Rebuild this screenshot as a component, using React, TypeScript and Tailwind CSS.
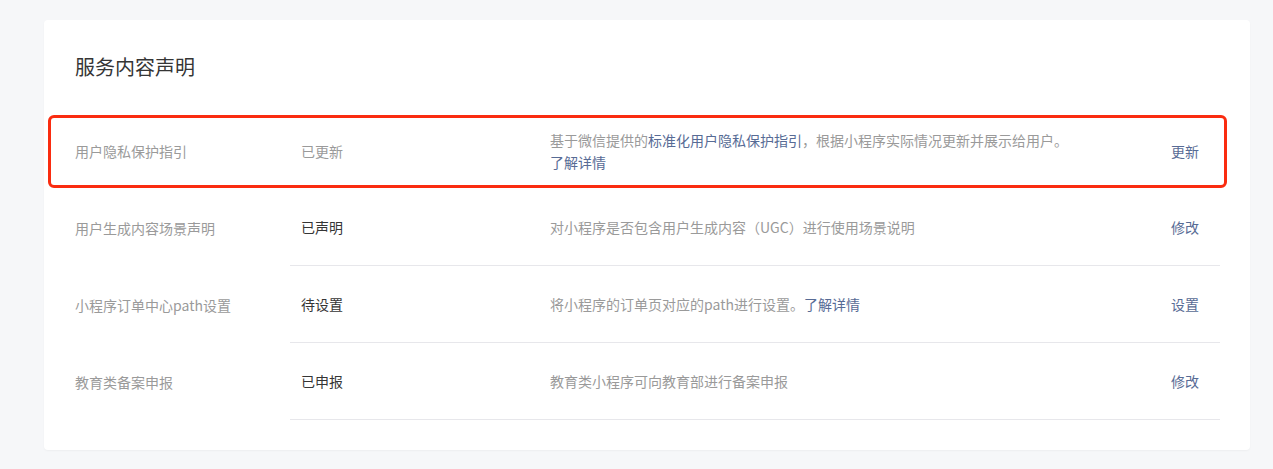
import React from 'react';

type Row = {
  label: string;
  status: string;
  statusMuted?: boolean;
  desc: React.ReactNode;
  action: string;
  last?: boolean;
};

const link = 'text-[#576b95]';

const rows: Row[] = [
  {
    label: '用户隐私保护指引',
    status: '已更新',
    statusMuted: true,
    desc: (
      <>
        <div>
          基于微信提供的<span className={link}>标准化用户隐私保护指引</span>，根据小程序实际情况更新并展示给用户。
        </div>
        <div className={link}>了解详情</div>
      </>
    ),
    action: '更新',
  },
  {
    label: '用户生成内容场景声明',
    status: '已声明',
    desc: '对小程序是否包含用户生成内容（UGC）进行使用场景说明',
    action: '修改',
  },
  {
    label: '小程序订单中心path设置',
    status: '待设置',
    desc: (
      <>
        将小程序的订单页对应的path进行设置。<span className={link}>了解详情</span>
      </>
    ),
    action: '设置',
  },
  {
    label: '教育类备案申报',
    status: '已申报',
    desc: '教育类小程序可向教育部进行备案申报',
    action: '修改',
  },
];

export default function App() {
  return (
    <div
      className="min-h-[469px] w-full bg-[#f6f7f9] pt-5 pl-[44px] pr-[23px] pb-5"
      style={{ fontFamily: '"Noto Sans CJK SC", "Noto Sans", sans-serif' }}
    >
      <div className="relative rounded bg-white pl-[31px] pr-[30px] pt-[35px] pb-[30px] shadow-[0_1px_2px_rgba(0,0,0,0.04)]">
        <h2 className="text-[20px] leading-[24px] text-[#353535]">服务内容声明</h2>

        <div className="mt-[33px] text-[14px] leading-[22px]">
          {rows.map((row, i) => (
            <div key={row.label} className="flex h-[77px]">
              <div className="flex w-[215px] items-center text-[#9a9a9a]">{row.label}</div>
              <div className={`flex flex-1 items-center ${i === 0 ? '' : 'border-b border-[#e7e7eb]'}`}>
                <div className={`w-[260px] pl-[11px] ${row.statusMuted ? 'text-[#9a9a9a]' : 'text-[#353535]'}`}>
                  {row.status}
                </div>
                <div className="flex-1 text-[#9a9a9a]">{row.desc}</div>
                <div className={`pr-[21px] ${link}`}>{row.action}</div>
              </div>
            </div>
          ))}
        </div>

        {/* highlight annotation */}
        <div className="pointer-events-none absolute left-[4px] top-[95px] h-[73px] w-[1179px] rounded-[6px] border-[3px] border-[#fa2c10]" />
      </div>
    </div>
  );
}
